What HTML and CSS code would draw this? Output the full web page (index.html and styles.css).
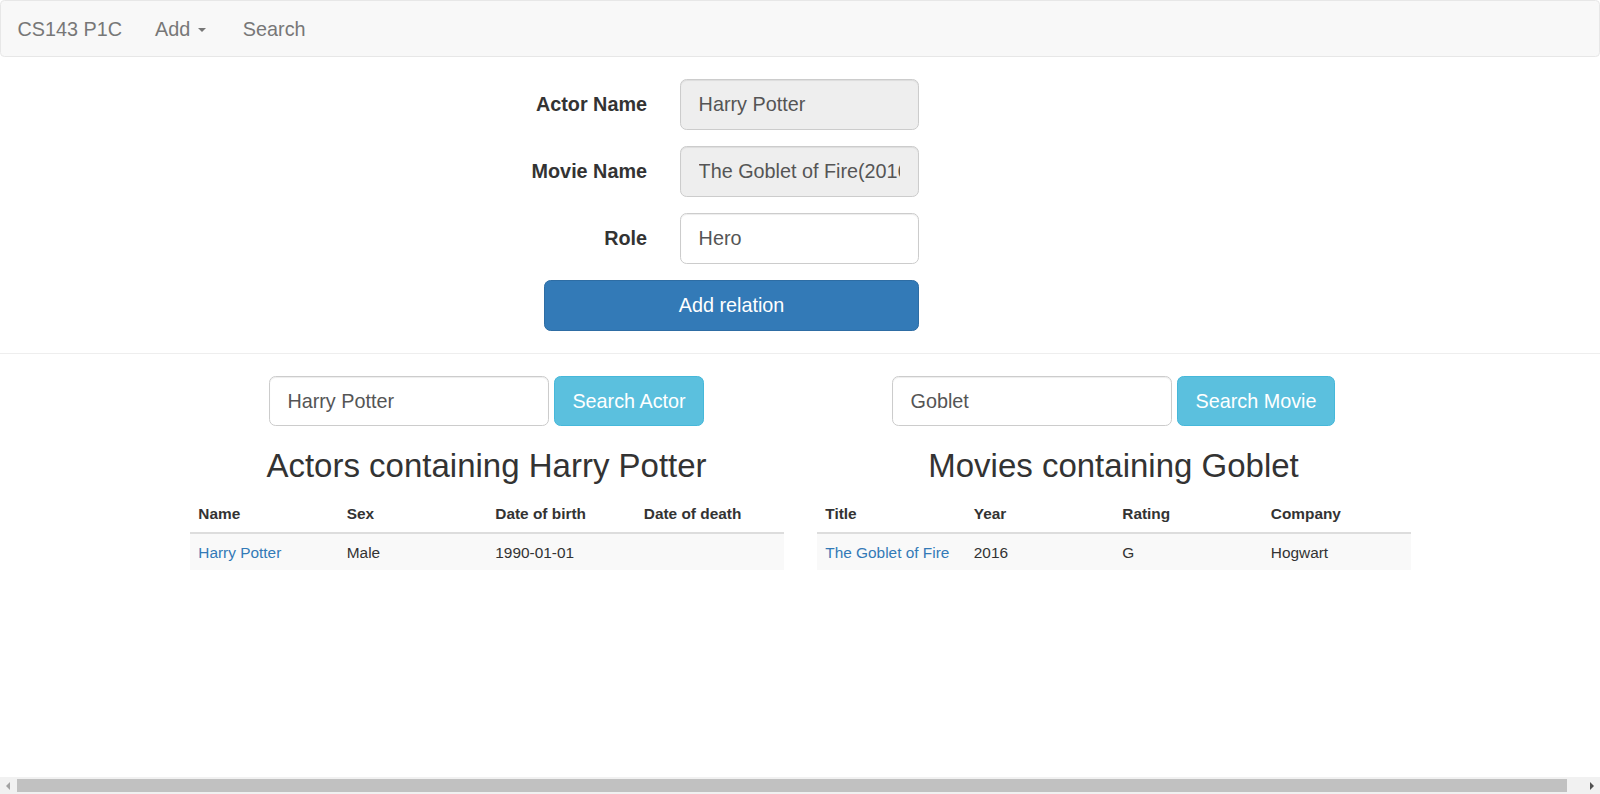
FILE: index.html
```html
<!DOCTYPE html>
<html lang="en">
<head>
<meta charset="utf-8">
<title>CS143 P1C</title>
<link rel="stylesheet" href="styles.css">
</head>
<body>
<nav class="navbar">
  <a class="navbar-brand" href="#">CS143 P1C</a>
  <ul class="nav">
    <li><a class="dropdown-toggle" href="#">Add <span class="caret"></span></a></li>
    <li><a href="#">Search</a></li>
  </ul>
</nav>

<form class="relation-form">
  <label class="form-label" for="actor">Actor Name</label>
  <div class="form-field"><input id="actor" class="form-control" type="text" value="Harry Potter" readonly></div>
  <label class="form-label" for="movie">Movie Name</label>
  <div class="form-field"><input id="movie" class="form-control" type="text" value="The Goblet of Fire(2016)" readonly></div>
  <label class="form-label" for="role">Role</label>
  <div class="form-field"><input id="role" class="form-control" type="text" value="Hero"></div>
  <div class="form-submit"><button type="button" class="btn btn-primary">Add relation</button></div>
</form>

<hr class="divider">

<div class="container">
  <section class="col">
    <form class="search-form">
      <input class="form-control search-input" type="text" value="Harry Potter">
      <button type="button" class="btn btn-info">Search Actor</button>
    </form>
    <h2 class="result-title">Actors containing Harry Potter</h2>
    <table class="table">
      <thead>
        <tr><th>Name</th><th>Sex</th><th>Date of birth</th><th>Date of death</th></tr>
      </thead>
      <tbody>
        <tr><td><a href="#">Harry Potter</a></td><td>Male</td><td>1990-01-01</td><td></td></tr>
      </tbody>
    </table>
  </section>
  <section class="col">
    <form class="search-form">
      <input class="form-control search-input" type="text" value="Goblet">
      <button type="button" class="btn btn-info">Search Movie</button>
    </form>
    <h2 class="result-title">Movies containing Goblet</h2>
    <table class="table">
      <thead>
        <tr><th>Title</th><th>Year</th><th>Rating</th><th>Company</th></tr>
      </thead>
      <tbody>
        <tr><td><a href="#">The Goblet of Fire</a></td><td>2016</td><td>G</td><td>Hogwart</td></tr>
      </tbody>
    </table>
  </section>
</div>

<div class="hscroll" aria-hidden="true">
  <span class="hscroll-arrow left"></span>
  <span class="hscroll-thumb"></span>
  <span class="hscroll-arrow right"></span>
</div>
</body>
</html>
```

FILE: styles.css
```css
* {
  box-sizing: border-box;
}

html, body {
  margin: 0;
  padding: 0;
  overflow: hidden;
}

body {
  font-family: "Liberation Sans", Arial, Helvetica, sans-serif;
  font-size: 15.4px;
  line-height: 22px;
  color: #333;
  background: #fff;
}

a {
  color: #337ab7;
  text-decoration: none;
}

/* Navbar */
.navbar {
  display: flex;
  align-items: stretch;
  width: 100%;
  height: 57px;
  margin: 0 0 22px;
  background: #f8f8f8;
  border: 1px solid #e7e7e7;
  border-radius: 4.4px;
}

.navbar-brand {
  display: block;
  padding: 16.5px 16.5px;
  font-size: 19.8px;
  line-height: 22px;
  color: #777;
}

.nav {
  display: flex;
  margin: 0;
  padding: 0;
  list-style: none;
}

.nav a {
  display: block;
  padding: 16.5px 16.5px;
  font-size: 19.8px;
  line-height: 22px;
  color: #777;
}

.nav .dropdown-toggle {
  padding-right: 20.5px;
}

.caret {
  display: inline-block;
  width: 0;
  height: 0;
  margin-left: 2.2px;
  vertical-align: middle;
  border-top: 4.4px solid #777;
  border-left: 4.4px solid transparent;
  border-right: 4.4px solid transparent;
}

/* Relation form */
.relation-form {
  display: grid;
  grid-template-columns: 64px 136px 272px;
  row-gap: 16.5px;
  align-items: center;
  width: 472px;
  margin: 0 0 0 463.5px;
}

.form-label {
  grid-column: 1 / 3;
  padding: 0 16.5px;
  text-align: right;
  white-space: nowrap;
  font-weight: bold;
  font-size: 19.8px;
  line-height: 26.4px;
}

.form-field {
  grid-column: 3;
  padding: 0 16.5px;
}

.form-submit {
  grid-column: 2 / 4;
  padding: 0 16.5px;
}

.form-control {
  display: block;
  width: 100%;
  height: 50.6px;
  padding: 11px 17.6px;
  font-family: inherit;
  font-size: 19.8px;
  line-height: 26.4px;
  color: #555;
  background: #fff;
  border: 1px solid #ccc;
  border-radius: 6.6px;
  box-shadow: inset 0 1px 1px rgba(0, 0, 0, 0.075);
  outline: none;
}

.form-control[readonly] {
  background: #eee;
}

.btn {
  display: block;
  height: 50.6px;
  padding: 11px 17.6px;
  font-family: inherit;
  font-size: 19.8px;
  line-height: 26.4px;
  color: #fff;
  border: 1px solid transparent;
  border-radius: 6.6px;
  cursor: pointer;
  white-space: nowrap;
}

.btn-primary {
  width: 100%;
  background: #337ab7;
  border-color: #2e6da4;
}

.btn-info {
  background: #5bc0de;
  border-color: #46b8da;
}

.divider {
  margin: 22px 0;
  height: 0;
  border: 0;
  border-top: 1px solid #eee;
}

/* Search area */
.container {
  display: flex;
  width: 1254px;
  margin: 0 auto;
}

.col {
  width: 627px;
  padding: 0 16.5px;
}

.search-form {
  display: flex;
  justify-content: center;
  gap: 5px;
  margin: 0;
}

.search-input {
  width: 280px;
}

.result-title {
  margin: 22px 0 12px;
  font-size: 33px;
  line-height: 1.1;
  font-weight: 500;
  text-align: center;
  color: #333;
}

.table {
  width: 100%;
  border-collapse: collapse;
  table-layout: fixed;
  margin-bottom: 22px;
}

.table th,
.table td {
  padding: 6.7px 8.8px;
  line-height: 22px;
  text-align: left;
  vertical-align: top;
  white-space: nowrap;
}

.table td {
  padding-top: 7.7px;
  padding-bottom: 6.2px;
}

.table th {
  font-weight: bold;
  border-bottom: 2px solid #ddd;
}

.table td {
  border-top: 1px solid #ddd;
}

.table tbody tr:nth-child(odd) {
  background: #f9f9f9;
}

/* Horizontal scrollbar drawn over the page bottom */
.hscroll {
  position: fixed;
  left: 0;
  right: 0;
  bottom: 0;
  height: 17px;
  background: #f1f1f1;
}

.hscroll-thumb {
  position: absolute;
  left: 17px;
  right: 33px;
  top: 2px;
  bottom: 2px;
  background: #c1c1c1;
}

.hscroll-arrow {
  position: absolute;
  top: 5px;
  width: 0;
  height: 0;
  border-top: 4px solid transparent;
  border-bottom: 4px solid transparent;
}

.hscroll-arrow.left {
  left: 6px;
  border-right: 4px solid #a3a3a3;
}

.hscroll-arrow.right {
  right: 6px;
  border-left: 4px solid #505050;
}
```
